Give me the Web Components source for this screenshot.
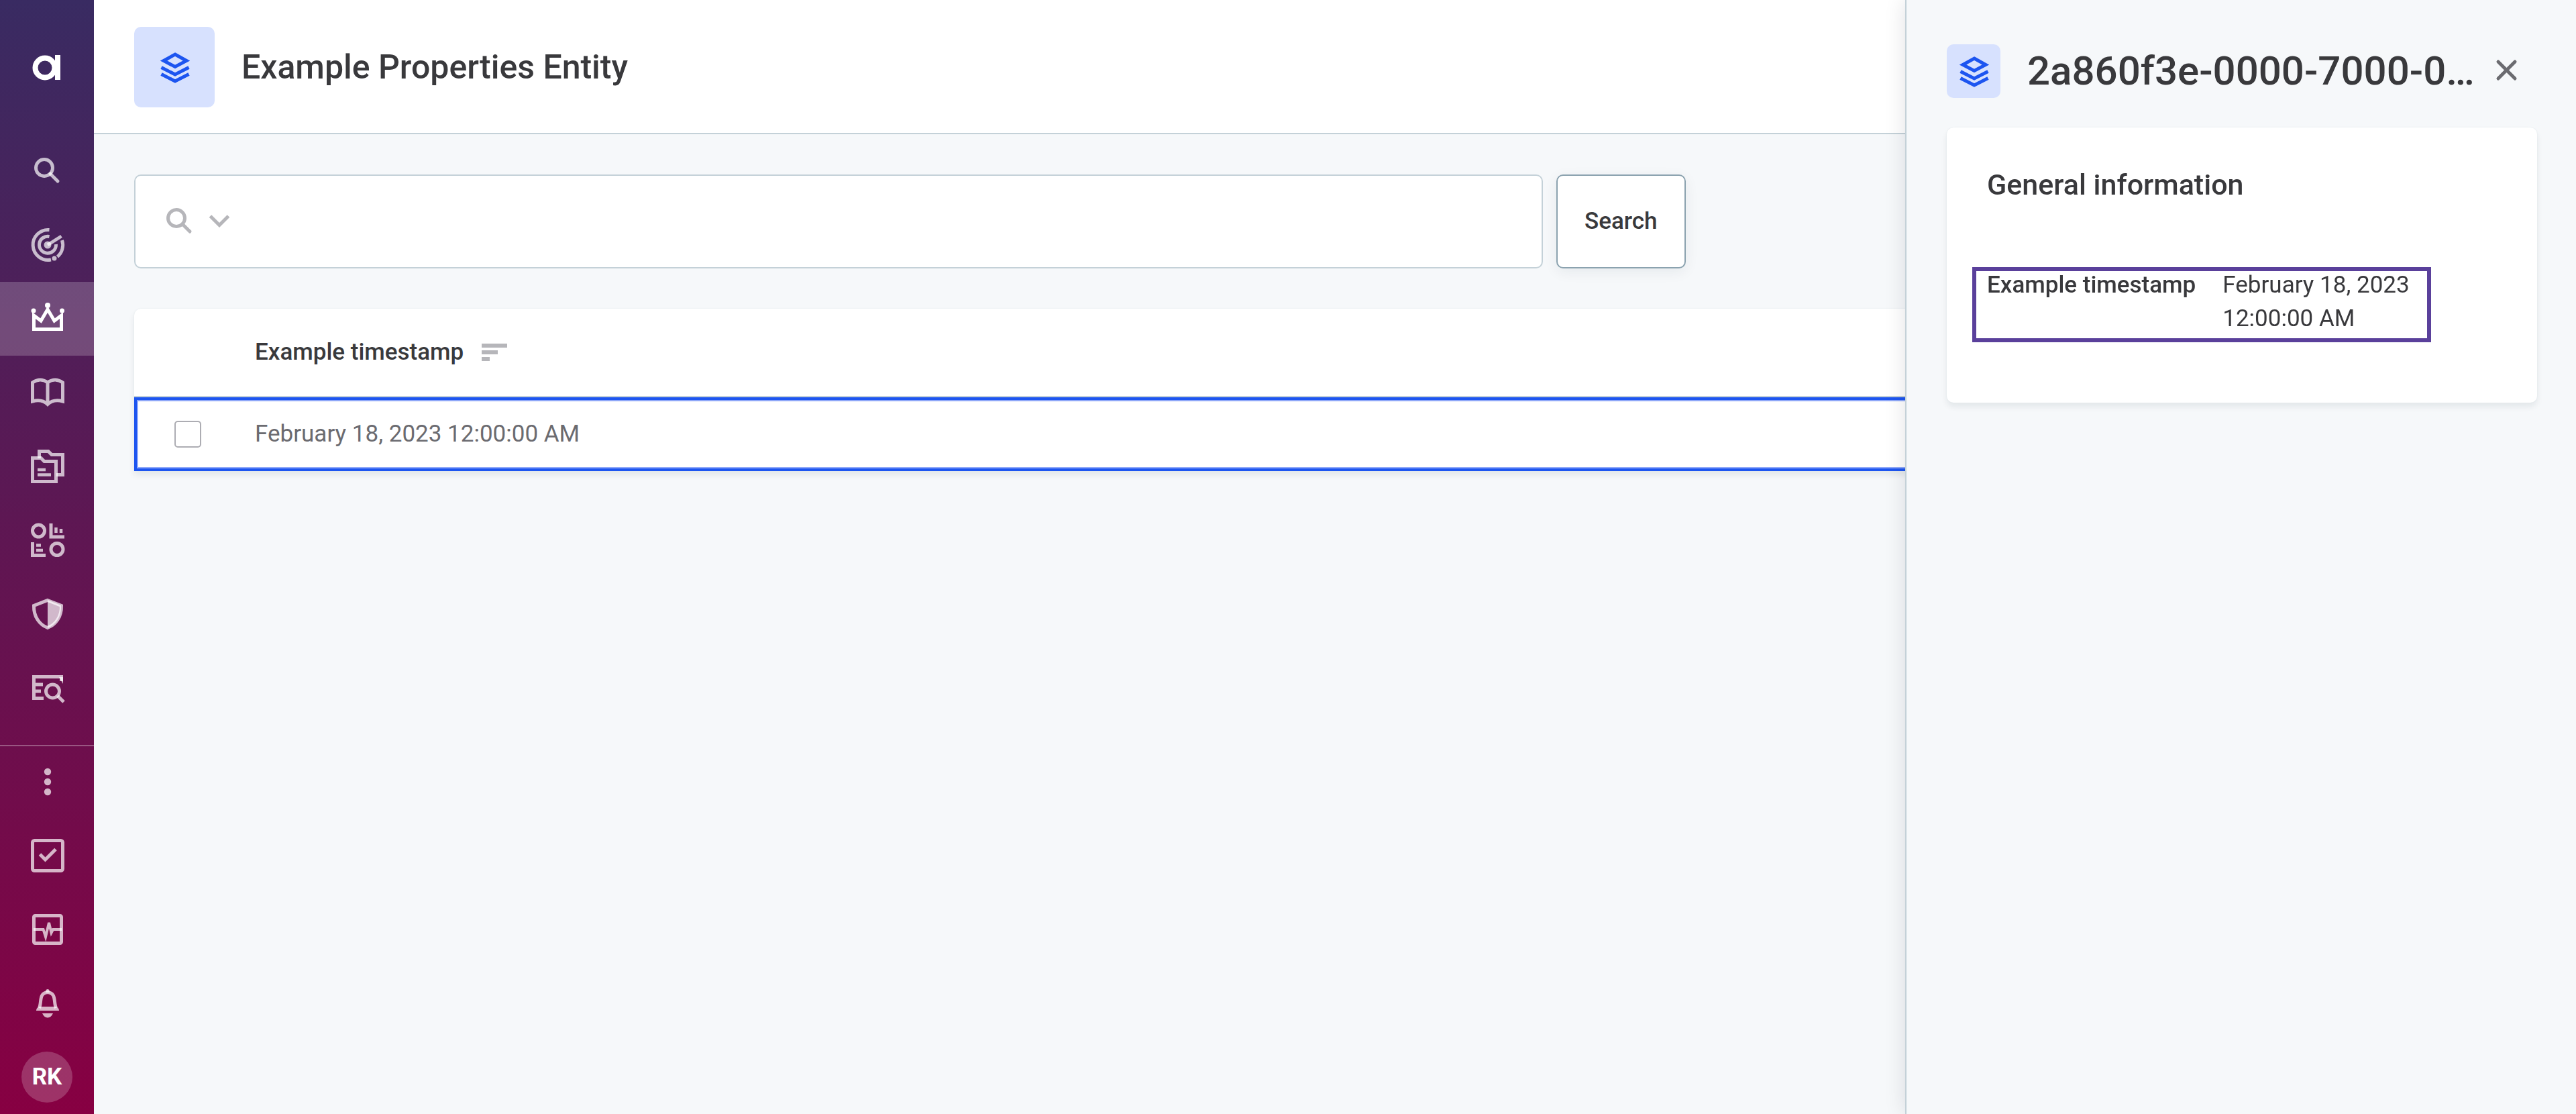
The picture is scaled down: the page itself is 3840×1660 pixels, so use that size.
<!DOCTYPE html>
<html lang="en">
<head>
  <meta charset="UTF-8">
  <meta name="viewport" content="width=device-width, initial-scale=1.0">
  <title>Example Properties Entity</title>
  <style>
    :root {
      --primary: #1d55f0;
      --primary-light: #d7e1fe;
      --text: #39393c;
      --text-muted: #6b6b70;
      --icon-muted: #b6b6ba;
      --line: #c4d1d8;
      --page-bg: #f6f8fa;
      --card-shadow: 0 0 2px #dfe7ea, 0 6px 10px rgba(0, 40, 50, 0.08);
    }

    body {
      margin: 0;
      background: var(--page-bg);
      color: var(--text);
      font-family: Roboto, "Liberation Sans", sans-serif;
      font-size: 35px;
      line-height: 50px;
    }
  </style>
</head>
<body>
  <app-shell>
    <side-nav slot="nav"></side-nav>
    <page-header>Example Properties Entity</page-header>
    <search-bar></search-bar>
    <entity-table></entity-table>
    <detail-drawer slot="drawer" heading="2a860f3e-0000-7000-0…">
      <info-card heading="General information">
        <info-row marked>
          <span slot="label">Example timestamp</span>
          February 18, 2023 12:00:00 AM
        </info-row>
      </info-card>
    </detail-drawer>
  </app-shell>

  <script>
    // Icons are drawn on a 60x60 grid, stroked with the current colour
    const ICONS = {
      logo: `<circle cx="27" cy="31" r="14.5" stroke-width="8"/><path class="fill" d="M42 12h8v37h-8z"/>`,
      search: `<circle cx="26" cy="25" r="12.5"/><path d="M35 34l11 11" stroke-linecap="round"/>`,
      chevron: `<path d="M16.500 22L30 35.500 43.500 22"/>`,
      close: `<path d="M17 16l25 25M42 16L17 41" stroke-linecap="round"/>`,
      layers: `<path d="M31 11L48 20.500 31 29.500 14 20.500zM10.500 30.500L31 41l20.500-10.500M10.500 40.500L31 51l20.500-10.500"/>`,
      radar: `
        <path d="M33.500 7.500A22.500 22.500 0 1 0 36 52M45.500 47.500A22.500 22.500 0 0 0 52.500 23"/>
        <path d="M33.500 17.500A12.500 12.500 0 1 0 43.500 29M31 30l20.500-13"/>
        <circle class="fill" cx="31" cy="30" r="5.500"/><circle class="fill" cx="41" cy="50" r="3.500"/>`,
      crown: `
        <path d="M10.500 25v20.500h41V25L41 33 31 16 21 33z"/>
        <circle class="fill" cx="31" cy="10" r="4"/><circle class="fill" cx="10" cy="18" r="3.500"/><circle class="fill" cx="52.500" cy="18" r="3.500"/>`,
      book: `<path d="M8.500 43V15Q20 7 31 15q11-8 22.500 0v28Q40 39 31 47.500 22 39 8.500 43zM31 15v32"/>`,
      folders: `
        <path d="M18.500 18V7.500H32l5 5h16.500v30H44"/>
        <path d="M8.500 17.500H21l5 5h17.500v30h-35z"/>
        <path stroke-width="4.500" d="M16 35h12M16 42.500h20"/>`,
      dashboard: `
        <circle cx="17.500" cy="16" r="9"/><circle cx="45" cy="43.500" r="9"/>
        <path d="M36 5v20h20M8.500 33v19.500H28"/>
        <path stroke-width="4.500" d="M43.500 11v8M51 13v6M14 37.500h7M14 45h10"/>`,
      shield: `
        <path d="M31 9.500l20.500 8C52 34 43 46 31 50.500 19 46 10 34 10.500 17.500z"/>
        <path class="fill" d="M31 9l20 8c1 17-8 29-20 34z"/>`,
      inspect: `
        <path d="M25 45.500H10.500v-32h41V20M10 25h14M10 35h11"/>
        <path class="fill" d="M48 14h6v10z"/>
        <circle cx="38.500" cy="35" r="10"/><path d="M46 42l9 9"/>`,
      more: `<circle class="fill" cx="31" cy="15" r="5.200"/><circle class="fill" cx="31" cy="30" r="5.200"/><circle class="fill" cx="31" cy="45" r="5.200"/>`,
      task: `<rect x="8.500" y="7.500" width="45" height="45" rx="3"/><path d="M19.500 28l8 8 15.500-15.500"/>`,
      pulse: `
        <rect x="10.500" y="9.500" width="41" height="41" rx="2"/>
        <path stroke-width="4" d="M10 30h14.500l3.500 11 5-21 3.500 15 2.500-5H52"/>`,
      bell: `
        <path d="M18.500 37c4-9-1-22 12.500-23.500C44.500 15 39.500 28 43.500 37"/>
        <path class="fill" d="M14 41q0-4 4-6h26q4 2 4 6zM23 45h16q-3 6.500-8 6.500T23 45zM28 14q0-5 3-5t3 5z"/>`,
      sort: `<path stroke-width="6" d="M12 20h38M12 30h24M12 40h12"/>`
    };

    class AppIcon extends HTMLElement {
      connectedCallback() {
        const root = this.attachShadow({ mode: 'open' });
        root.innerHTML = `
          <style>
            :host {
              display: block;
              flex: none;
              width: 60px;
              height: 60px;
            }

            svg {
              display: block;
              width: 100%;
              height: 100%;
              fill: none;
              stroke: currentColor;
            }

            .fill {
              fill: currentColor;
              stroke: none;
            }
          </style>
          <svg viewBox="0 0 60 60" stroke-width="5" aria-hidden="true">${ICONS[this.getAttribute('name')]}</svg>
        `;
      }
    }

    class AppShell extends HTMLElement {
      connectedCallback() {
        const root = this.attachShadow({ mode: 'open' });
        root.innerHTML = `
          <style>
            :host {
              display: flex;
              min-height: 100vh;
            }

            main {
              flex: 1;
              min-width: 0;
            }
          </style>
          <slot name="nav"></slot>
          <main><slot></slot></main>
          <slot name="drawer"></slot>
        `;
      }
    }

    class SideNav extends HTMLElement {
      connectedCallback() {
        this.attachShadow({ mode: 'open' });
        this.render();
      }

      renderLink(name, label, active) {
        return `
          <a href="#${name}" aria-label="${label}" ${active ? 'class="active" aria-current="page"' : ''}>
            <app-icon name="${name}"></app-icon>
          </a>
        `;
      }

      render() {
        this.shadowRoot.innerHTML = `
          <style>
            :host {
              display: block;
              flex: none;
              width: 140px;
              background: linear-gradient(#392b62, #870042);
            }

            nav {
              display: flex;
              flex-direction: column;
              height: 100vh;
            }

            a, button {
              display: flex;
              flex: none;
              align-items: center;
              justify-content: center;
              box-sizing: border-box;
              width: 100%;
              height: 110px;
              padding: 0;
              border: 0;
              background: none;
              color: rgba(255, 255, 255, 0.7);
              font: inherit;
              text-decoration: none;
              cursor: pointer;
            }

            .logo {
              height: 200px;
              color: #fff;
            }

            .active {
              background: rgba(255, 255, 255, 0.2);
              color: #fff;
            }

            .bottom {
              margin-top: auto;
              box-shadow: inset 0 2px rgba(255, 255, 255, 0.3);
            }

            .avatar {
              width: 76px;
              height: 76px;
              border-radius: 50%;
              background: rgba(255, 255, 255, 0.2);
              color: #fff;
              font-weight: 700;
              line-height: 76px;
              text-align: center;
            }
          </style>
          <nav>
            <a class="logo" href="#home" aria-label="Home"><app-icon name="logo"></app-icon></a>
            ${this.renderLink('search', 'Search')}
            ${this.renderLink('radar', 'Monitoring')}
            ${this.renderLink('crown', 'Master data', true)}
            ${this.renderLink('book', 'Glossary')}
            ${this.renderLink('folders', 'Catalog')}
            ${this.renderLink('dashboard', 'Dashboards')}
            ${this.renderLink('shield', 'Data quality')}
            ${this.renderLink('inspect', 'Reference data')}
            <div class="bottom">
              ${this.renderLink('more', 'More')}
              ${this.renderLink('task', 'Tasks')}
              ${this.renderLink('pulse', 'Processing')}
              ${this.renderLink('bell', 'Notifications')}
              <button type="button"><span class="avatar">RK</span></button>
            </div>
          </nav>
        `;
      }
    }

    class EntityBadge extends HTMLElement {
      connectedCallback() {
        const root = this.attachShadow({ mode: 'open' });
        root.innerHTML = `
          <style>
            :host {
              display: flex;
              flex: none;
              align-items: center;
              justify-content: center;
              width: 80px;
              height: 80px;
              border-radius: 10px;
              background: var(--primary-light);
              color: var(--primary);
            }

            :host([large]) {
              width: 120px;
              height: 120px;
            }
          </style>
          <app-icon name="layers"></app-icon>
        `;
      }
    }

    class PageHeader extends HTMLElement {
      connectedCallback() {
        const root = this.attachShadow({ mode: 'open' });
        root.innerHTML = `
          <style>
            :host {
              display: block;
              background: #fff;
              border-bottom: 2px solid var(--line);
            }

            header {
              display: flex;
              align-items: center;
              gap: 40px;
              padding: 40px 60px 38px;
            }

            h1 {
              margin: 0;
              font-size: 50px;
              font-weight: 500;
              line-height: 60px;
            }
          </style>
          <header>
            <entity-badge large></entity-badge>
            <h1><slot></slot></h1>
          </header>
        `;
      }
    }

    class SearchBar extends HTMLElement {
      connectedCallback() {
        const root = this.attachShadow({ mode: 'open' });
        root.innerHTML = `
          <style>
            :host {
              display: block;
              padding: 60px 60px 0;
            }

            form {
              display: flex;
              gap: 20px;
            }

            .field {
              display: flex;
              flex: 1;
              align-items: center;
              box-sizing: border-box;
              max-width: 2100px;
              height: 140px;
              padding: 0 35px;
              border: 2px solid var(--line);
              border-radius: 10px;
              background: #fff;
              color: var(--icon-muted);
            }

            input {
              flex: 1;
              min-width: 0;
              padding: 0 20px;
              border: 0;
              outline: 0;
              background: none;
              color: var(--text);
              font: inherit;
            }

            .options {
              padding: 0;
              border: 0;
              background: none;
              color: inherit;
              cursor: pointer;
            }

            .submit {
              padding: 0 40px;
              border: 2px solid #8ba2af;
              border-radius: 10px;
              background: #fff;
              box-shadow: 0 5px 20px rgba(0, 40, 50, 0.07);
              color: var(--text);
              font: inherit;
              font-weight: 500;
              cursor: pointer;
            }
          </style>
          <form role="search">
            <div class="field">
              <app-icon name="search"></app-icon>
              <button class="options" type="button" aria-label="Search options"><app-icon name="chevron"></app-icon></button>
              <input type="text" aria-label="Search records" autocomplete="off">
            </div>
            <button class="submit" type="submit">Search</button>
          </form>
        `;

        root.querySelector('form').addEventListener('submit', (event) => event.preventDefault());
      }
    }

    class EntityTable extends HTMLElement {
      connectedCallback() {
        const root = this.attachShadow({ mode: 'open' });
        root.innerHTML = `
          <style>
            :host {
              display: block;
              padding: 60px;
            }

            table {
              width: 100%;
              border-spacing: 0;
              border-radius: 10px 10px 0 0;
              background: #fff;
              box-shadow: var(--card-shadow);
            }

            th, td {
              padding: 0;
              text-align: left;
              font-weight: 400;
            }

            th {
              height: 130px;
              border-bottom: 2px solid var(--line);
            }

            td {
              height: 110px;
              color: var(--text-muted);
            }

            .select {
              width: 120px;
              padding-left: 60px;
            }

            tbody tr {
              box-shadow: inset 0 0 0 4px var(--primary), inset 0 0 0 6px #8fa8f8;
            }

            button {
              display: flex;
              align-items: center;
              padding: 0;
              border: 0;
              background: none;
              color: var(--text);
              font: inherit;
              font-weight: 500;
              cursor: pointer;
            }

            button app-icon {
              margin-left: 15px;
              color: var(--icon-muted);
            }

            input {
              display: block;
              appearance: none;
              box-sizing: border-box;
              width: 40px;
              height: 40px;
              margin: 0;
              border: 2px solid #adadb3;
              border-radius: 5px;
              background: #fff;
            }
          </style>
          <table>
            <thead>
              <tr>
                <th class="select"></th>
                <th scope="col"><button type="button">Example timestamp<app-icon name="sort"></app-icon></button></th>
              </tr>
            </thead>
            <tbody>
              <tr>
                <td class="select"><input type="checkbox" aria-label="Select row"></td>
                <td>February 18, 2023 12:00:00 AM</td>
              </tr>
            </tbody>
          </table>
        `;
      }
    }

    class DetailDrawer extends HTMLElement {
      connectedCallback() {
        const root = this.attachShadow({ mode: 'open' });
        root.innerHTML = `
          <style>
            :host {
              display: block;
              position: fixed;
              top: 0;
              right: 0;
              bottom: 0;
              box-sizing: border-box;
              width: 1000px;
              max-width: 100%;
              padding: 60px 58px 0 60px;
              border-left: 2px solid var(--line);
              background: var(--page-bg);
              box-shadow: 0 0 30px rgba(0, 20, 30, 0.12);
            }

            :host([hidden]) {
              display: none;
            }

            header {
              display: flex;
              align-items: center;
              height: 92px;
              margin-bottom: 38px;
              padding-right: 15px;
            }

            h2 {
              flex: 1;
              min-width: 0;
              margin: 0 0 0 40px;
              font-size: 60px;
              font-weight: 500;
              line-height: 80px;
              white-space: nowrap;
            }

            button {
              padding: 0;
              border: 0;
              background: none;
              color: var(--text-muted);
              cursor: pointer;
            }
          </style>
          <header>
            <entity-badge></entity-badge>
            <h2>${this.getAttribute('heading')}</h2>
            <button type="button" aria-label="Close"><app-icon name="close"></app-icon></button>
          </header>
          <slot></slot>
        `;

        root.querySelector('button').addEventListener('click', () => {
          this.hidden = true;
        });
      }
    }

    class InfoCard extends HTMLElement {
      connectedCallback() {
        const root = this.attachShadow({ mode: 'open' });
        root.innerHTML = `
          <style>
            :host {
              display: block;
              padding: 60px 60px 100px;
              border-radius: 10px;
              background: #fff;
              box-shadow: var(--card-shadow);
            }

            h3 {
              margin: 0 0 100px;
              font-size: 43px;
              font-weight: 500;
              line-height: 50px;
            }
          </style>
          <h3>${this.getAttribute('heading')}</h3>
          <slot></slot>
        `;
      }
    }

    class InfoRow extends HTMLElement {
      connectedCallback() {
        const root = this.attachShadow({ mode: 'open' });
        root.innerHTML = `
          <style>
            :host {
              display: flex;
              gap: 40px;
              position: relative;
            }

            .label {
              flex: none;
              font-weight: 500;
            }

            /* marker frame drawn over the row */
            :host([marked])::after {
              content: "";
              position: absolute;
              inset: -2px 98px -10px -22px;
              border: 6px solid #5a409b;
              pointer-events: none;
            }
          </style>
          <div class="label"><slot name="label"></slot></div>
          <div><slot></slot></div>
        `;
      }
    }

    customElements.define('app-icon', AppIcon);
    customElements.define('entity-badge', EntityBadge);
    customElements.define('app-shell', AppShell);
    customElements.define('side-nav', SideNav);
    customElements.define('page-header', PageHeader);
    customElements.define('search-bar', SearchBar);
    customElements.define('entity-table', EntityTable);
    customElements.define('detail-drawer', DetailDrawer);
    customElements.define('info-card', InfoCard);
    customElements.define('info-row', InfoRow);
  </script>
</body>
</html>
